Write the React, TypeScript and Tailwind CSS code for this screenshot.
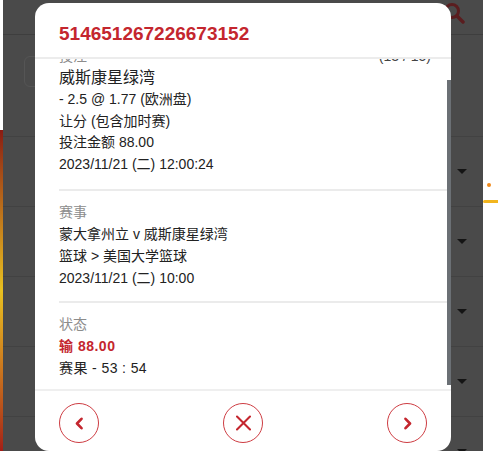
import React, { useEffect, useRef } from 'react';

const font = "font-['Liberation_Sans','Noto_Sans_CJK_SC',sans-serif]";

function Triangle() {
    return (
        <svg width="10" height="6" viewBox="0 0 10 6" className="mr-[16px]">
            <path d="M0 0 L10 0 L5 5 Z" fill="#141414" />
        </svg>
    );
}

function BackgroundPage() {
    const rows = [0, 1, 2, 3, 4];
    return (
        <div className="flex h-[451px] w-[480px] flex-col bg-[#4a4a4a]">
            <div className="flex h-[35px] shrink-0 items-start justify-end border-b border-[#3e3e3e] pr-[18px] pt-[2px]">
                <svg width="22" height="22" viewBox="0 0 22 22">
                    <circle cx="9" cy="9" r="6.5" fill="none" stroke="#5a1d1f" strokeWidth="3" />
                    <path d="M14 14 L20 20" stroke="#5a1d1f" strokeWidth="3.5" strokeLinecap="round" />
                </svg>
            </div>
            <div className="h-[102px] shrink-0 border-b border-[#424242] pl-[21px] pt-[21px]">
                <div className="h-[31px] w-[60px] rounded-[6px] border border-[#555]" />
            </div>
            {rows.map((r) => (
                <div key={r} className="flex h-[70px] shrink-0 items-center justify-end border-b border-[#424242]">
                    <Triangle />
                </div>
            ))}
        </div>
    );
}

function CircleButton({ children }: { children: React.ReactNode }) {
    return (
        <button className="flex h-10 w-10 items-center justify-center rounded-full border border-[#cd3c42]">
            {children}
        </button>
    );
}

export default function App() {
    const scrollRef = useRef<HTMLDivElement>(null);

    useEffect(() => {
        if (scrollRef.current) {
            scrollRef.current.scrollTop = scrollRef.current.scrollHeight;
        }
    }, []);

    return (
        <div className={`relative flex h-[451px] w-[498px] overflow-hidden bg-white ${font}`}>
            {/* page under the overlay */}
            <div className="flex h-full w-[3px] flex-col">
                <div className="h-[130px] bg-white" />
                <div className="flex-1 bg-gradient-to-b from-[#8a1a12] via-[#e8c020] to-[#a31d17]" />
            </div>
            <BackgroundPage />
            <div className="flex-1 bg-white pt-[183px]">
                <div className="ml-[4px] h-[4px] w-[4px] rounded-full bg-[#f08a1c]" />
                <div className="mt-[13px] h-[3px] w-full rounded-l-full bg-[#f2b51e]" />
            </div>

            {/* modal */}
            <div className="absolute left-[35px] top-[3px] flex h-[448px] w-[416px] flex-col overflow-hidden rounded-[14px] bg-white">
                <div className="h-[56px] shrink-0 border-b-2 border-[#ececec] pl-6 pt-[19px]">
                    <h2 className="text-[19px] font-bold leading-[24px] text-[#c4262e]">514651267226673152</h2>
                </div>

                <div className="relative min-h-0 flex-1">
                    <div
                        ref={scrollRef}
                        className="h-full overflow-y-auto pr-[4px] [scrollbar-width:none]"
                    >
                        <div className="ml-6 border-b-2 border-[#ebebeb] pb-[14px] pt-[10px] text-[14px] leading-[21.5px] text-[#222]">
                            <div className="flex justify-between pr-4 leading-[22px]">
                                <span className="text-[#8c8c8c]">投注</span>
                                <span className="text-[#444]">(13 / 15)</span>
                            </div>
                            <div className="text-[16px] leading-[22px]">威斯康星绿湾</div>
                            <div>- 2.5 @ 1.77 (欧洲盘)</div>
                            <div>让分 (包含加时赛)</div>
                            <div>投注金额 88.00</div>
                            <div>2023/11/21 (二) 12:00:24</div>
                        </div>

                        <div className="ml-6 border-b-2 border-[#ebebeb] pb-[12px] pt-[10px] text-[14px] leading-[22px] text-[#222]">
                            <div className="text-[#8c8c8c]">赛事</div>
                            <div>蒙大拿州立 v 威斯康星绿湾</div>
                            <div>篮球 &gt; 美国大学篮球</div>
                            <div>2023/11/21 (二) 10:00</div>
                        </div>

                        <div className="ml-6 pb-[10px] pt-[10px] text-[14px] leading-[22px] text-[#222]">
                            <div className="text-[#8c8c8c]">状态</div>
                            <div className="font-semibold tracking-[0.5px] text-[#c4262e]">输 88.00</div>
                            <div className="tracking-[0.4px]">赛果 - 53 : 54</div>
                        </div>
                    </div>
                    {/* scrollbar thumb */}
                    <div className="absolute right-0 top-[21px] h-[305px] w-[4px] bg-[#6b7075]" />
                </div>

                <div className="flex shrink-0 items-start justify-between border-t-2 border-[#efefef] px-6 pb-2 pt-3">
                    <CircleButton>
                        <svg width="9" height="13" viewBox="0 0 9 13">
                            <path d="M6.5 1.8 L2 6.5 L6.5 11.2" fill="none" stroke="#c4262e" strokeWidth="2.6" strokeLinecap="round" strokeLinejoin="round" />
                        </svg>
                    </CircleButton>
                    <CircleButton>
                        <svg width="17" height="16" viewBox="0 0 17 16">
                            <path d="M2 1.5 L15 14.5 M15 1.5 L2 14.5" fill="none" stroke="#c4262e" strokeWidth="2.1" strokeLinecap="round" />
                        </svg>
                    </CircleButton>
                    <CircleButton>
                        <svg width="9" height="13" viewBox="0 0 9 13">
                            <path d="M2.5 1.8 L7 6.5 L2.5 11.2" fill="none" stroke="#c4262e" strokeWidth="2.6" strokeLinecap="round" strokeLinejoin="round" />
                        </svg>
                    </CircleButton>
                </div>
            </div>
        </div>
    );
}
